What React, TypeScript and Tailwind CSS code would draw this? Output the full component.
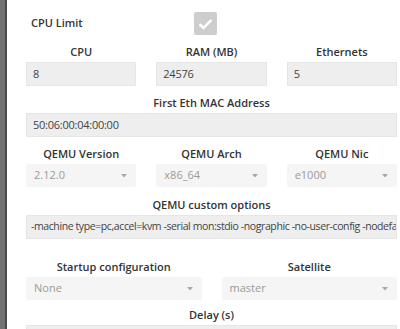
import React from "react";

const font = { fontFamily: '"Open Sans", "Noto Sans", sans-serif' };

function Label({ children }: { children: React.ReactNode }) {
  return (
    <div className="text-center text-[11px] leading-[14px] font-semibold text-[#333] mb-[3px] whitespace-nowrap">
      {children}
    </div>
  );
}

function Input({ value, tight }: { value: string; tight?: boolean }) {
  return (
    <div
      className={
        tight
          ? "h-[24px] min-w-0 bg-[#eeeeee] border border-[#e6e6e6] pl-[4px] pr-[2px] flex items-center text-[10.5px] text-[#444] whitespace-nowrap overflow-hidden tracking-[-0.4px]"
          : "h-[24px] min-w-0 bg-[#eeeeee] border border-[#e6e6e6] px-[6px] flex items-center text-[11px] text-[#444] whitespace-nowrap overflow-hidden tracking-[-0.25px]"
      }
    >
      {value}
    </div>
  );
}

function Select({ value }: { value: string }) {
  return (
    <div className="h-[23px] bg-[#f5f5f5] rounded-[3px] pl-[8px] pr-[9px] flex items-center justify-between text-[11px] text-[#9a9a9a]">
      <span>{value}</span>
      <svg width="6" height="4" viewBox="0 0 6 4">
        <path d="M0 0 L6 0 L3 3.5 Z" fill="#a8a8a8" />
      </svg>
    </div>
  );
}

export default function App() {
  return (
    <div className="w-[400px] h-[329px] overflow-hidden bg-white flex" style={font}>
      <div className="w-[5px] bg-[#727272] shrink-0" />
      <div className="w-[2px] bg-[#4c4c4c] shrink-0" />
      <div className="flex-1 min-w-0 pl-[19px] pr-[3px] pt-[12px]">
        <div className="flex items-center h-[23px]">
          <div className="w-[168px] pl-[5px] text-[11px] font-semibold text-[#333]">CPU Limit</div>
          <div className="w-[23px] h-[23px] rounded-[2px] bg-[#cdcdcd] flex items-center justify-center">
            <svg width="15" height="12" viewBox="0 0 15 12">
              <path d="M1.5 6.2 L5.5 10 L13.5 1.8" stroke="white" strokeWidth="2.6" fill="none" />
            </svg>
          </div>
        </div>

        <div className="grid grid-cols-3 gap-x-[20px] mt-[10px]">
          <div className="min-w-0">
            <Label>CPU</Label>
            <Input value="8" />
          </div>
          <div className="min-w-0">
            <Label>RAM (MB)</Label>
            <Input value="24576" />
          </div>
          <div className="min-w-0">
            <Label>Ethernets</Label>
            <Input value="5" />
          </div>
        </div>

        <div className="mt-[10px]">
          <Label>First Eth MAC Address</Label>
          <Input value="50:06:00:04:00:00" />
        </div>

        <div className="grid grid-cols-3 gap-x-[20px] mt-[10px]">
          <div className="min-w-0">
            <Label>QEMU Version</Label>
            <Select value="2.12.0" />
          </div>
          <div className="min-w-0">
            <Label>QEMU Arch</Label>
            <Select value="x86_64" />
          </div>
          <div className="min-w-0">
            <Label>QEMU Nic</Label>
            <Select value="e1000" />
          </div>
        </div>

        <div className="mt-[11px]">
          <Label>QEMU custom options</Label>
          <Input tight value="-machine type=pc,accel=kvm -serial mon:stdio -nographic -no-user-config -nodefa" />
        </div>

        <div className="grid grid-cols-2 gap-x-[20px] mt-[21px]">
          <div className="min-w-0">
            <Label>Startup configuration</Label>
            <Select value="None" />
          </div>
          <div className="min-w-0">
            <Label>Satellite</Label>
            <Select value="master" />
          </div>
        </div>

        <div className="mt-[8px]">
          <Label>Delay (s)</Label>
          <Input value="" />
        </div>
      </div>
    </div>
  );
}
